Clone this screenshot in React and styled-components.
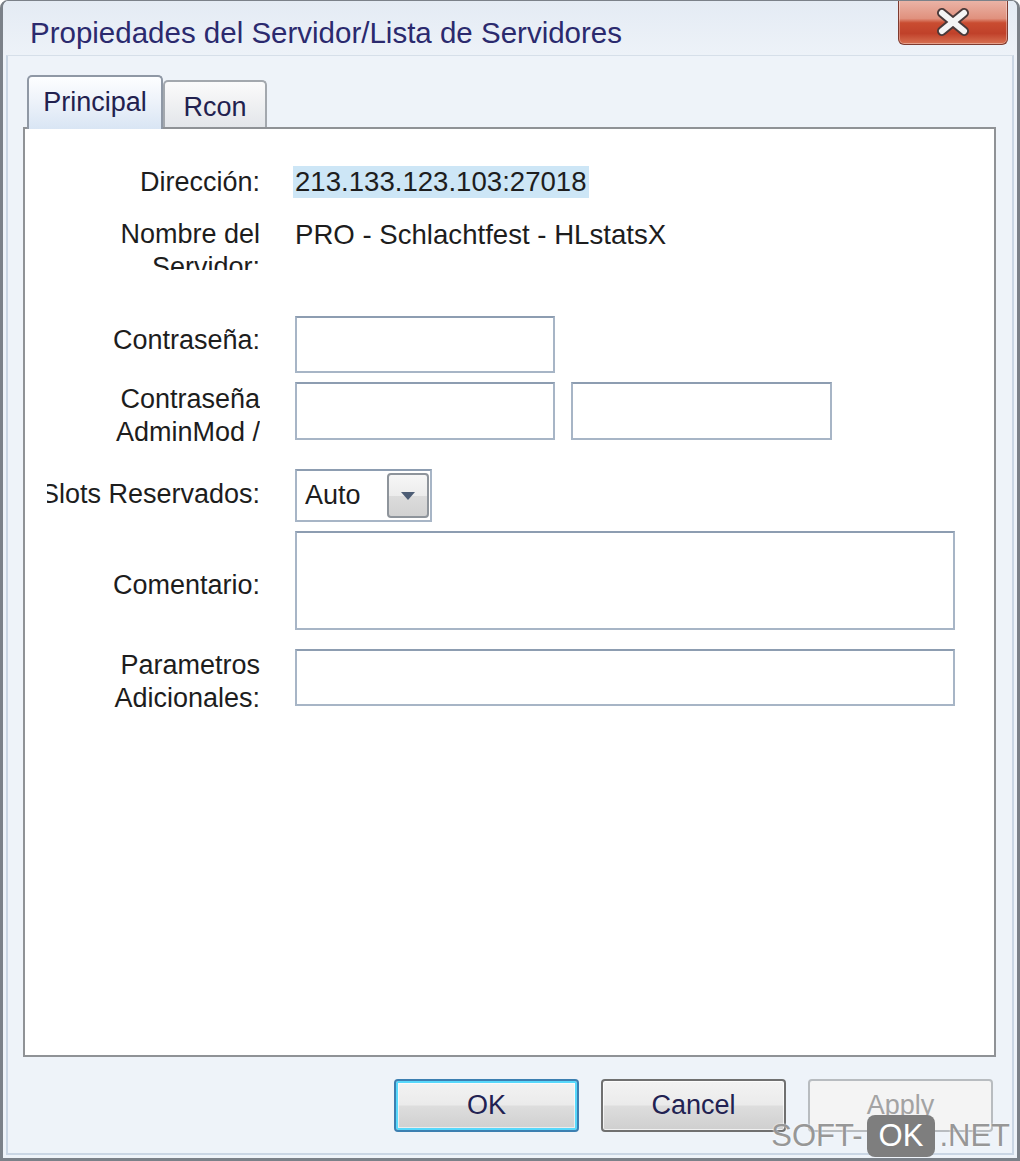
import React from "react";
import styled, { createGlobalStyle } from "styled-components";

const GlobalStyle = createGlobalStyle`
  html, body {
    margin: 0;
    padding: 0;
    background: #ffffff;
  }
  * {
    box-sizing: border-box;
  }
`;

const font = `"Liberation Sans", Arial, sans-serif`;

const Window = styled.div`
  position: relative;
  width: 1020px;
  height: 1161px;
  display: flex;
  flex-direction: column;
  background: #eef3f9;
  border: 3px solid #7b8189;
  border-top-width: 1px;
  border-radius: 8px 8px 0 0;
  font-family: ${font};
  overflow: hidden;
`;

const TitleBar = styled.div`
  height: 54px;
  flex: none;
  display: flex;
  align-items: flex-start;
  padding-left: 27px;
  background: linear-gradient(#e4ebf4, #edf2f8);
`;

const Title = styled.div`
  margin-top: 15px;
  font-size: 29.5px;
  line-height: 34px;
  color: #2b2a6e;
  white-space: nowrap;
`;

const CloseButton = styled.div`
  margin-left: auto;
  margin-right: 9px;
  margin-top: -1px;
  width: 110px;
  height: 45px;
  display: flex;
  align-items: center;
  justify-content: center;
  border: 1px solid #7e3a2f;
  border-top: none;
  border-radius: 0 0 6px 6px;
  background: linear-gradient(
    #ebb5a8 0%,
    #e0917e 42%,
    #c94c31 52%,
    #c0412a 76%,
    #d87152 100%
  );
  box-shadow: inset 0 0 0 1px rgba(255, 255, 255, 0.35);
`;

const Body = styled.div`
  flex: 1;
  display: flex;
  flex-direction: column;
  margin: 0 3px 3px;
  padding: 19px 16px 21px 15px;
  border: 2px solid #cad6e4;
  border-top: 1px solid #d6dfe9;
`;

const TabStrip = styled.div`
  height: 52px;
  display: flex;
  align-items: flex-end;
  padding-left: 4px;
`;

const Tab = styled.div`
  position: relative;
  z-index: 1;
  width: ${(p) => (p.$active ? 136 : 104)}px;
  height: ${(p) => (p.$active ? 54 : 47)}px;
  margin-bottom: ${(p) => (p.$active ? -2 : 0)}px;
  padding-top: 8px;
  text-align: center;
  font-size: 27px;
  line-height: 34px;
  color: #22214f;
  border: 2px solid ${(p) => (p.$active ? "#8f98a5" : "#a3a8ae")};
  border-bottom: none;
  border-radius: 5px 5px 0 0;
  background: ${(p) =>
    p.$active
      ? "linear-gradient(#fdfeff 0%, #eef3fa 45%, #d9e5f4 100%)"
      : "linear-gradient(#fbfbfb 0%, #eff0f2 50%, #e3e6ea 100%)"};
`;

const Panel = styled.div`
  height: 930px;
  flex: none;
  background: #ffffff;
  border: 2px solid #8f9296;
  padding-top: 37px;
`;

const Row = styled.div`
  display: grid;
  grid-template-columns: 235px 1fr;
  grid-template-rows: ${(p) => p.$h}px;
  column-gap: 35px;
  align-items: start;
  margin-top: ${(p) => p.$top || 0}px;
`;

const Label = styled.div`
  display: flex;
  justify-content: flex-end;
  overflow: hidden;
  text-align: right;
  margin-top: ${(p) => p.$offset || 0}px;
  margin-left: ${(p) => p.$clipLeft || 0}px;
  height: ${(p) => (p.$clip ? `${p.$clip}px` : "auto")};
  font-size: 27px;
  line-height: 33px;
  color: #1d1d1d;
  white-space: ${(p) => (p.$nowrap ? "nowrap" : "normal")};
`;

const Value = styled.div`
  font-size: 27.6px;
  line-height: ${(p) => p.$lh || 32}px;
  color: #1d1d1d;
  white-space: nowrap;
`;

const Selected = styled.span`
  display: inline-block;
  margin-left: -2px;
  padding: 0 2px;
  background: #cde6f6;
`;

const FieldGroup = styled.div`
  display: flex;
  gap: 16px;
`;

const TextBox = styled.input`
  display: block;
  width: ${(p) => p.$w}px;
  height: ${(p) => p.$h}px;
  margin: 0;
  padding: 0 8px;
  font-family: ${font};
  font-size: 27px;
  background: #ffffff;
  border: 2px solid #a7b5c6;
  border-top-color: #8d9db1;
  border-radius: 0;
  outline: none;
`;

const TextArea = styled.textarea`
  display: block;
  width: 660px;
  height: 99px;
  margin: 0;
  padding: 4px 8px;
  resize: none;
  font-family: ${font};
  font-size: 27px;
  background: #ffffff;
  border: 2px solid #a7b5c6;
  border-top-color: #8d9db1;
  border-radius: 0;
  outline: none;
`;

const Combo = styled.div`
  width: 137px;
  height: 53px;
  display: flex;
  align-items: center;
  padding-left: 8px;
  background: #ffffff;
  border: 2px solid #a7b5c6;
  border-top-color: #8d9db1;
  font-size: 27px;
  color: #1d1d1d;
`;

const ComboButton = styled.div`
  margin-left: auto;
  margin-right: 1px;
  width: 42px;
  height: 45px;
  display: flex;
  align-items: center;
  justify-content: center;
  border: 2px solid #8e949b;
  border-radius: 4px;
  background: linear-gradient(#f6f6f6 0%, #ececec 50%, #dcdcdc 51%, #d2d2d2 100%);
`;

const ButtonRow = styled.div`
  display: flex;
  justify-content: flex-end;
  gap: 22px;
  margin-top: 22px;
  padding-right: 3px;
`;

const Button = styled.div`
  width: 185px;
  height: 53px;
  display: flex;
  align-items: center;
  justify-content: center;
  font-size: 27px;
  color: ${(p) => (p.$disabled ? "#a3a3a3" : "#222252")};
  border: 2px solid
    ${(p) => (p.$focused ? "#3c7fb1" : p.$disabled ? "#b8bcc0" : "#707070")};
  border-radius: 4px;
  background: ${(p) =>
    p.$disabled
      ? "#f4f4f4"
      : "linear-gradient(#f3f3f3 0%, #ebebeb 48%, #dddddd 52%, #cfcfcf 100%)"};
  box-shadow: ${(p) =>
    p.$focused
      ? "inset 0 0 0 2px #58d8fb, inset 0 0 0 3px rgba(255,255,255,0.6)"
      : p.$disabled
      ? "none"
      : "inset 0 0 0 1px rgba(255,255,255,0.7)"};
`;

const Watermark = styled.div`
  position: absolute;
  right: 7px;
  bottom: 1px;
  display: flex;
  align-items: center;
  font-family: ${font};
  font-size: 31px;
  color: #979797;
  text-shadow: 0 0 2px #ffffff;
`;

const WatermarkBox = styled.span`
  margin: 0 4px;
  padding: 0 12px;
  height: 42px;
  line-height: 42px;
  border-radius: 8px;
  background: #7e7e7e;
  color: #ffffff;
  text-shadow: none;
`;

const CloseIcon = () => (
  <svg width="38" height="28" viewBox="0 0 38 28">
    <g strokeLinecap="round">
      <line x1="8" y1="5" x2="30" y2="23" stroke="#4a3a3a" strokeWidth="10" />
      <line x1="30" y1="5" x2="8" y2="23" stroke="#4a3a3a" strokeWidth="10" />
      <line x1="8" y1="5" x2="30" y2="23" stroke="#f4f4f4" strokeWidth="6" />
      <line x1="30" y1="5" x2="8" y2="23" stroke="#f4f4f4" strokeWidth="6" />
    </g>
  </svg>
);

const ArrowDown = () => (
  <svg width="16" height="10" viewBox="0 0 16 10">
    <path d="M1 1 L15 1 L8 9 Z" fill="#4d5d75" />
  </svg>
);

export default function App() {
  return (
    <>
      <GlobalStyle />
      <Window>
        <TitleBar>
          <Title>Propiedades del Servidor/Lista de Servidores</Title>
          <CloseButton>
            <CloseIcon />
          </CloseButton>
        </TitleBar>
        <Body>
          <TabStrip>
            <Tab $active>Principal</Tab>
            <Tab>Rcon</Tab>
          </TabStrip>
          <Panel>
            <Row $h={32}>
              <Label>Dirección:</Label>
              <Value>
                <Selected>213.133.123.103:27018</Selected>
              </Value>
            </Row>
            <Row $h={54} $top={20}>
              <Label $clip={52}>Nombre del Servidor:</Label>
              <Value $lh={33}>PRO - Schlachtfest - HLstatsX</Value>
            </Row>
            <Row $h={57} $top={44}>
              <Label $offset={8}>Contraseña:</Label>
              <TextBox $w={260} $h={57} type="password" readOnly />
            </Row>
            <Row $h={58} $top={9}>
              <Label $offset={1} $clip={66}>
                Contraseña AdminMod /
              </Label>
              <FieldGroup>
                <TextBox $w={260} $h={58} readOnly />
                <TextBox $w={261} $h={58} readOnly />
              </FieldGroup>
            </Row>
            <Row $h={53} $top={29}>
              <Label $offset={9} $clipLeft={22} $nowrap>
                <span>Slots Reservados:</span>
              </Label>
              <Combo>
                Auto
                <ComboButton>
                  <ArrowDown />
                </ComboButton>
              </Combo>
            </Row>
            <Row $h={99} $top={9}>
              <Label $offset={38}>Comentario:</Label>
              <TextArea readOnly />
            </Row>
            <Row $h={57} $top={19}>
              <Label $offset={0}>Parametros Adicionales:</Label>
              <TextBox $w={660} $h={57} readOnly />
            </Row>
          </Panel>
          <ButtonRow>
            <Button $focused>OK</Button>
            <Button>Cancel</Button>
            <Button $disabled>Apply</Button>
          </ButtonRow>
        </Body>
        <Watermark>
          SOFT-<WatermarkBox>OK</WatermarkBox>.NET
        </Watermark>
      </Window>
    </>
  );
}
